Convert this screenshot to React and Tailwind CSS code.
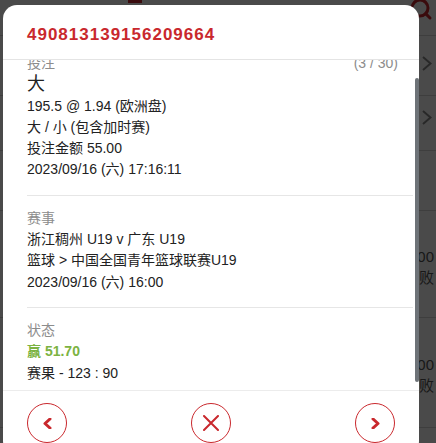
import { Search } from "lucide-react";

const RED = "#c9282d";

function Arrow({ dir }) {
  // heavy little chevron inside the round footer buttons
  const pts = dir === "left" ? "7,1 2,5.5 7,10" : "2,1 7,5.5 2,10";
  return (
    <svg width="9" height="11" viewBox="0 0 9 11" fill="none">
      <polyline points={pts} stroke={RED} strokeWidth="3" strokeLinecap="round" strokeLinejoin="round" />
    </svg>
  );
}

function CloseIcon() {
  return (
    <svg width="16" height="16" viewBox="0 0 16 16" fill="none">
      <path d="M1 1 L15 15 M15 1 L1 15" stroke={RED} strokeWidth="2" strokeLinecap="round" />
    </svg>
  );
}

function PageChevron() {
  return (
    <svg width="10" height="15" viewBox="0 0 10 15" fill="none">
      <polyline points="1,1 8.5,7.5 1,14" stroke="#8a8a8a" strokeWidth="2" />
    </svg>
  );
}

function Section({ children, last }) {
  return (
    <div
      className={`ml-6 mr-[6px] pr-[15px] pt-3 pb-[14px] ${
        last ? "" : "border-b border-[#e6e6e6]"
      }`}
    >
      {children}
    </div>
  );
}

export default function App() {
  return (
    <div className="relative h-[443px] w-[436px] overflow-hidden bg-white font-[family-name:'Liberation_Sans','Noto_Sans_CJK_SC',sans-serif] text-[14px] leading-[21.3px] text-[#222]">
      {/* Page behind the dialog */}
      <div className="flex flex-col">
        <div className="flex h-[36px] justify-between border-b border-[#d4d4d4] pr-[3px]">
          <div className="ml-[128px] h-[3px] w-[14px] bg-[#c9282d]" />
          <Search size={24} strokeWidth={3} className="-mt-[3px] text-[#c9282d]" />
        </div>
        <div className="flex h-[60px] justify-end border-b border-[#d4d4d4] pr-[4px] pt-[20px]">
          <PageChevron />
        </div>
        <div className="flex h-[55px] justify-end border-b border-[#d4d4d4] pr-[4px] pt-[14px]">
          <PageChevron />
        </div>
        <div className="h-[60px] border-b border-[#d4d4d4]" />
        <div className="h-[107px] border-b border-[#d4d4d4] pr-[2px] pt-[35px] text-right text-[15px] text-[#555]">
          <p>1.00</p>
          <p>失败</p>
        </div>
        <div className="h-[110px] border-b border-[#d4d4d4] pr-[2px] pt-[36px] text-right text-[15px] text-[#555]">
          <p>1.00</p>
          <p>失败</p>
        </div>
      </div>

      {/* Overlay */}
      <div className="absolute inset-0 bg-black/[0.71]">
        <div className="absolute left-[3px] top-[5px] w-[416px] overflow-hidden rounded-[14px] bg-white">
          {/* Header */}
          <div className="border-b border-[#e4e4e4] px-6 pb-[14px] pt-5">
            <h2 className="text-[17px] font-bold leading-5 tracking-[1px] text-[#c9282d]">
              490813139156209664
            </h2>
          </div>

          {/* Scroll body */}
          <div className="relative h-[330px] overflow-hidden">
            <div className="-mt-[19px]">
              <Section>
                <div className="flex justify-between text-[#8c8c8c]">
                  <span>投注</span>
                  <span>(3 / 30)</span>
                </div>
                <p className="text-[18px]">大</p>
                <p>195.5 @ 1.94 (欧洲盘)</p>
                <p>大 / 小 (包含加时赛)</p>
                <p>投注金额 55.00</p>
                <p>2023/09/16 (六) 17:16:11</p>
              </Section>

              <Section>
                <p className="text-[#8c8c8c]">赛事</p>
                <p>浙江稠州 U19 v 广东 U19</p>
                <p>篮球 &gt; 中国全国青年篮球联赛U19</p>
                <p>2023/09/16 (六) 16:00</p>
              </Section>

              <Section last>
                <p className="text-[#8c8c8c]">状态</p>
                <p className="font-bold text-[#7cb342]">赢 51.70</p>
                <p>赛果 - 123 : 90</p>
              </Section>
            </div>
            <div className="absolute right-0 top-[18px] h-[304px] w-[4px] rounded-[2px] bg-[#6e7378]" />
          </div>

          {/* Footer */}
          <div className="flex items-center justify-between border-t border-[#ececec] px-6 pb-3 pt-3">
            <button className="flex h-10 w-10 items-center justify-center rounded-full border border-[#c9282d]">
              <Arrow dir="left" />
            </button>
            <button className="flex h-10 w-10 items-center justify-center rounded-full border border-[#c9282d]">
              <CloseIcon />
            </button>
            <button className="flex h-10 w-10 items-center justify-center rounded-full border border-[#c9282d]">
              <Arrow dir="right" />
            </button>
          </div>
        </div>
      </div>
    </div>
  );
}
